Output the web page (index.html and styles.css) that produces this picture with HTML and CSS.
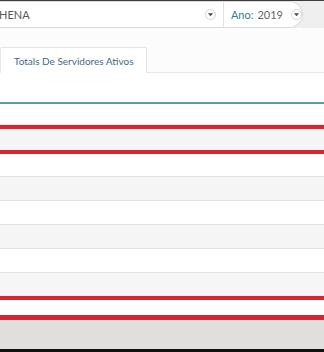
FILE: index.html
```html
<!DOCTYPE html>
<html>
<head>
    <title>Servidores Ativos</title>
    <meta name="viewport" content="width=device-width, initial-scale=1.0">
    <link rel="stylesheet" href="styles.css">
</head>
<body>
    <div id="page">
        <div id="filter-bar">
            <div class="filter-box">
                <div class="filter-field orgao">
                    <span class="value">HENA</span>
                    <span class="drop-btn">
                        <svg width="11" height="11" viewBox="0 0 11 11"><circle cx="5.5" cy="5.5" r="5" fill="#fff" stroke="#d2d2d2"/><path d="M2.9 4.3 L8.1 4.3 L5.5 7.2 Z" fill="#4a4a4a"/></svg>
                    </span>
                </div>
                <div class="filter-field ano">
                    <span class="label">Ano:</span>
                    <span class="value">2019</span>
                    <span class="drop-btn">
                        <svg width="11" height="11" viewBox="0 0 11 11"><circle cx="5.5" cy="5.5" r="5" fill="#fff" stroke="#d2d2d2"/><path d="M2.9 4.3 L8.1 4.3 L5.5 7.2 Z" fill="#4a4a4a"/></svg>
                    </span>
                </div>
            </div>
        </div>

        <div id="tabs">
            <div class="tab active">Totals De Servidores Ativos</div>
            <div class="tab-rest"></div>
        </div>

        <div id="tab-panel"></div>

        <div id="grid">
            <div class="row head"></div>
            <div class="row alt flagged"></div>
            <div class="row"></div>
            <div class="row alt lined"></div>
            <div class="row lined"></div>
            <div class="row alt lined"></div>
            <div class="row lined"></div>
            <div class="row alt short"></div>
            <div class="row flagged last"></div>
            <div class="row footer"></div>
        </div>
    </div>
</body>
</html>
```

FILE: styles.css
```css
* {
    box-sizing: border-box;
    margin: 0;
    padding: 0;
}

body {
    font-family: Lato, "Open Sans", Arial, sans-serif;
    font-size: 11px;
    background: #fcfcfc;
    height: 352px;
    overflow: hidden;
}

#page {
    display: flex;
    flex-direction: column;
    height: 352px;
    border-top: 1px solid #3c3c3c;
    border-bottom: 3px solid #111;
}

#filter-bar {
    background: #efefef;
    height: 27px;
}

.filter-box {
    display: flex;
    width: 303px;
    height: 27px;
    background: #fff;
    border: 1px solid #dcdcdc;
    border-left: none;
    border-radius: 0 14px 14px 0;
}

.filter-field {
    display: flex;
    align-items: center;
    height: 100%;
}

.filter-field.orgao {
    width: 230px;
    padding-right: 7px;
    border-right: 1px solid #e2e2e2;
}

.filter-field.orgao .value {
    flex-grow: 1;
    color: #555;
    margin-left: -1px;
}

.filter-field.ano {
    padding-left: 7px;
}

.filter-field .label {
    color: #2f7f8e;
    margin-right: 4px;
}

.filter-field.ano .value {
    color: #666;
    margin-right: 8px;
}

.drop-btn {
    display: flex;
    width: 11px;
    height: 11px;
}

#tabs {
    display: flex;
    margin-top: 19px;
    height: 26px;
}

.tab {
    width: 147px;
    padding: 7px 0 0 13px;
    font-size: 10px;
    white-space: nowrap;
    color: #3d6c7f;
    background: #fff;
    border: 1px solid #e4e4e4;
    border-bottom: none;
    border-left-color: #e9e9e9;
    border-radius: 2px 2px 0 0;
}

.tab-rest {
    flex-grow: 1;
    border-bottom: 1px solid #e6e6e6;
}

#tab-panel {
    height: 31px;
    background: #fff;
    border-bottom: 2px solid #5e9ba5;
}

#grid {
    display: flex;
    flex-direction: column;
    flex-grow: 1;
    background: #fff;
}

.row {
    height: 22px;
    background: #fff;
}

.row.head {
    height: 21px;
    border-bottom: 1px solid #f7eaea;
}

.row.alt {
    background: #f5f5f5;
}

.row.flagged {
    height: 29px;
    border-top: 4px solid #d7262f;
    border-bottom: 4px solid #d7262f;
}

.row.lined {
    height: 24px;
    border-top: 1px solid #e2e2e2;
}

.row.short {
    height: 24px;
    border-top: 1px solid #e2e2e2;
    background: #f6f6f6;
}

.row.last {
    height: 24px;
    border-bottom-width: 5px;
}

.row.footer {
    flex-grow: 1;
    background: #e1dfde;
}
```
